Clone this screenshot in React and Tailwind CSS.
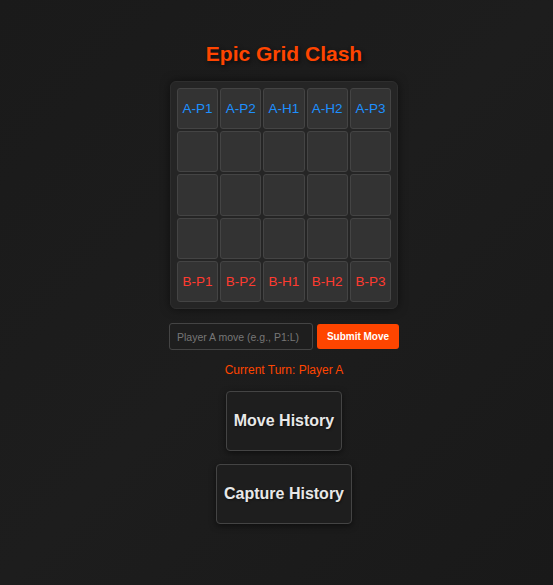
import React, { useState } from 'react';

const topRow = ['A-P1', 'A-P2', 'A-H1', 'A-H2', 'A-P3'];
const bottomRow = ['B-P1', 'B-P2', 'B-H1', 'B-H2', 'B-P3'];

export default function App() {
  const [move, setMove] = useState('');

  const cells = [];
  for (let r = 0; r < 5; r++) {
    for (let c = 0; c < 5; c++) {
      let label = '';
      let color = '';
      if (r === 0) {
        label = topRow[c];
        color = 'text-[#1e90ff]';
      } else if (r === 4) {
        label = bottomRow[c];
        color = 'text-[#ff3b30]';
      }
      cells.push(
        <div
          key={`${r}-${c}`}
          className={`aspect-square flex items-center justify-center pt-[2px] rounded-[3px] border border-[#444] bg-[#333] text-[13.5px] ${color}`}
        >
          {label}
        </div>
      );
    }
  }

  return (
    <div
      className="min-h-screen w-full bg-gradient-to-br from-[#1a1a1a] via-[#1d1d1d] to-[#191919] pl-[15px] flex flex-col items-center"
      style={{ fontFamily: '"Liberation Sans", Arial, sans-serif' }}
    >
      <h1 className="mt-[42px] text-[21px] leading-[24px] font-bold text-[#ff4500] [text-shadow:2px_2px_4px_rgba(0,0,0,0.6)]">
        Epic Grid Clash
      </h1>

      <div className="mt-[15px] w-[228px] p-[6px] rounded-[6px] border border-[#2e2e2e] bg-[#252525] shadow-[0_0_10px_rgba(0,0,0,0.5)]">
        <div className="grid grid-cols-5 gap-[2px]">{cells}</div>
      </div>

      <div className="mt-[14px] flex items-center gap-[4px]">
        <input
          type="text"
          value={move}
          onChange={(e) => setMove(e.target.value)}
          placeholder="Player A move (e.g., P1:L)"
          className="w-[144px] h-[27px] px-[7px] rounded-[3px] border border-[#444] bg-[#1e1e1e] text-[10.5px] text-[#ddd] placeholder:text-[#777] outline-none"
        />
        <button className="w-[82px] h-[25px] rounded-[3px] bg-[#ff4500] text-white text-[10px] font-bold">
          Submit Move
        </button>
      </div>

      <p className="mt-[13px] text-[12px] leading-[14px] text-[#ff4500]">Current Turn: Player A</p>

      <button className="mt-[14px] h-[60px] px-[7px] rounded-[4px] border border-[#444] bg-[#1e1e1e] text-[16px] font-bold text-[#e8e8e8] shadow-[0_2px_6px_rgba(0,0,0,0.5)] [text-shadow:1px_1px_2px_rgba(0,0,0,0.5)]">
        Move History
      </button>

      <button className="mt-[13px] h-[60px] px-[7px] rounded-[4px] border border-[#444] bg-[#1e1e1e] text-[16px] font-bold text-[#e8e8e8] shadow-[0_2px_6px_rgba(0,0,0,0.5)] [text-shadow:1px_1px_2px_rgba(0,0,0,0.5)]">
        Capture History
      </button>
    </div>
  );
}
